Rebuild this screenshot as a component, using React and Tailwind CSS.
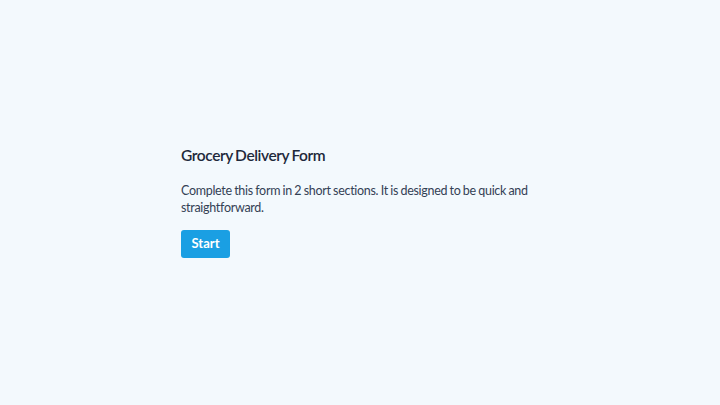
import React from "react";

export default function App() {
  return (
    <div
      className="w-full h-[405px] bg-[#f3f9fd] flex items-center justify-center"
      style={{ fontFamily: "Lato, 'Noto Sans', sans-serif" }}
    >
      <div className="w-[358px] -mt-[3px]">
        <h1 className="text-[15.5px] leading-[20px] font-semibold text-[#1e293b] tracking-[-0.4px] [word-spacing:-1px]">
          Grocery Delivery Form
        </h1>
        <p className="mt-[17px] w-[370px] text-[12.5px] leading-[17px] text-[#334155] tracking-[-0.3px] [word-spacing:-0.5px]">
          Complete this form in 2 short sections. It is designed to be quick and straightforward.
        </p>
        <button className="mt-[14px] h-[28px] w-[49px] rounded-[3px] bg-[#1a9fe3] text-white text-[13px] font-bold">
          Start
        </button>
      </div>
    </div>
  );
}
